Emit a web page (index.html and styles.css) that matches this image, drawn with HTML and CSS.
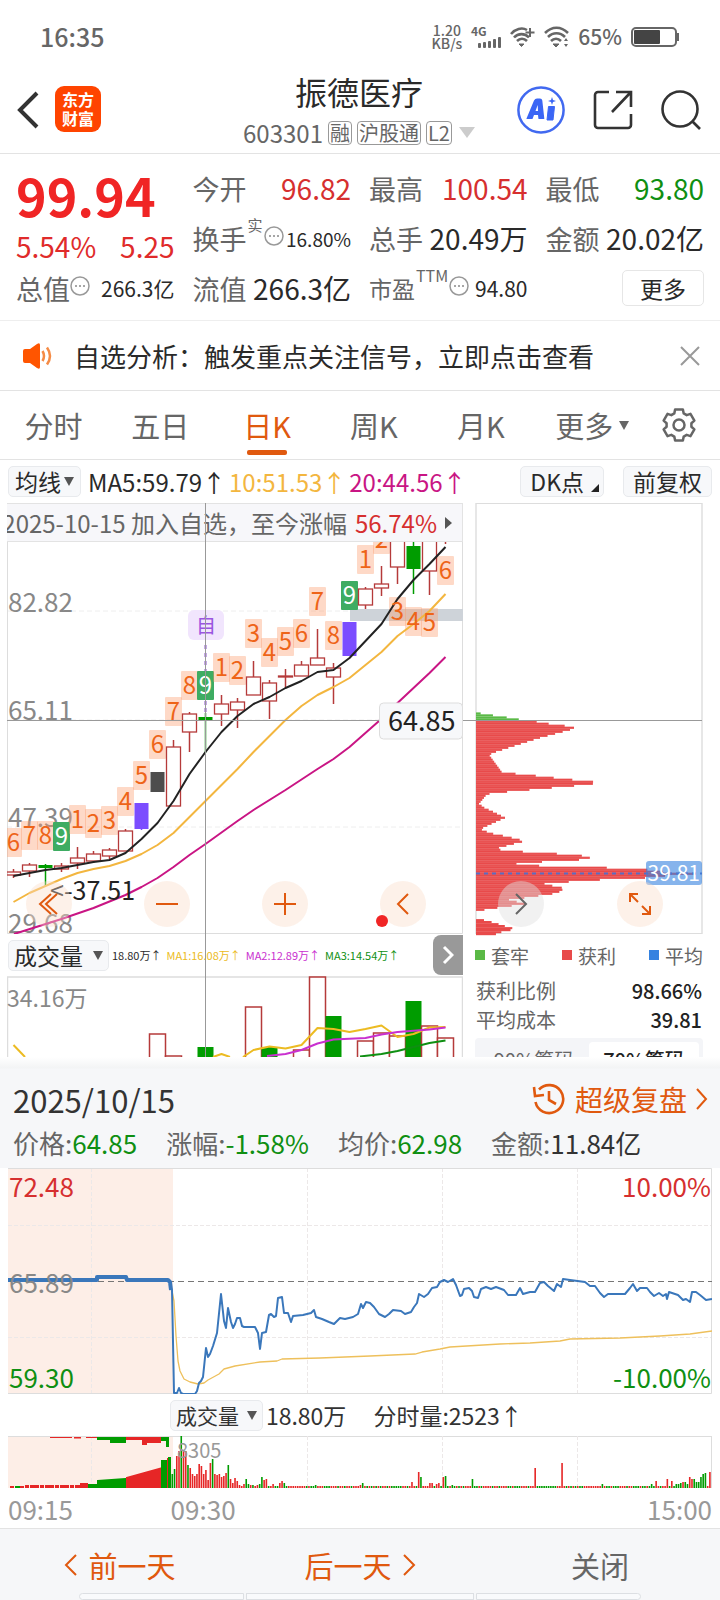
FILE: index.html
```html
<!DOCTYPE html>
<html lang="zh-CN">
<head>
<meta charset="utf-8">
<meta name="viewport" content="width=device-width, initial-scale=1">
<title>振德医疗 603301</title>
<link rel="stylesheet" href="styles.css">
</head>
<body>
<div class="status">
  <span class="clock">16:35</span>
  <div class="status-right">
    <span class="rate">1.20<br>KB/s</span>
    <svg class="signal" width="32" height="24" viewBox="0 0 32 24"><text x="1" y="11" class="sig-text">4G</text><g fill="#666"><rect x="8" y="18" width="3" height="5" rx="1"/><rect x="13" y="17" width="3" height="6" rx="1"/><rect x="18" y="16" width="3" height="7" rx="1"/><rect x="23" y="14" width="3" height="9" rx="1"/><rect x="28" y="12" width="3" height="11" rx="1"/></g></svg>
    <svg width="26" height="22" viewBox="0 0 26 22" fill="none" stroke="#666" stroke-width="2.6"><path d="M1 8C5 3 12 1 17 4"/><path d="M4 11.500C8 7 15 7 19 11.500M7 15C10 12 14 12 17 15"/><path d="M9 18h5l-2.500 2.500z" fill="#666" stroke-width="1"/><path d="M20 2v9M15.500 6.500h9" stroke-width="2"/></svg>
    <svg width="26" height="22" viewBox="0 0 26 22" fill="none" stroke="#666" stroke-width="2.600"><path d="M1 7C8 0 17 0 24 7M4 11C9 6 16 6 21 11M7 15C10 12 14 12 17 15"/><path d="M9 18h6l-3 3z" fill="#666" stroke-width="1"/><path d="M20 15l2-3 2 3zM20 18l2 3 2-3z" fill="#666" stroke="none"/></svg>
    <span class="percent">65%</span>
    <svg width="50" height="22" viewBox="0 0 50 22"><rect x="2" y="2" width="44" height="18" rx="4" fill="#fff" stroke="#666" stroke-width="2"/><rect x="4" y="4" width="26" height="14" rx="1" fill="#444"/><path d="M47 7h2v8h-2z" fill="#666"/></svg>
  </div>
</div>

<header class="header">
  <div class="header-left">
    <button class="icon-btn" aria-label="返回"><svg width="22" height="38" viewBox="0 0 22 38" fill="none" stroke="#333" stroke-width="4"><path d="M20 2L3 19l17 17"/></svg></button>
    <div class="logo"><span>东方</span><span>财富</span></div>
  </div>
  <div class="header-title">
    <h1>振德医疗</h1>
    <div class="code"><span>603301</span><span class="badge">融</span><span class="badge">沪股通</span><span class="badge">L2</span><svg class="code-arrow" width="16" height="11" viewBox="0 0 16 11"><path d="M0 0h16L8 11z" fill="#ccc"/></svg></div>
  </div>
  <div class="header-right">
    <button class="icon-btn" aria-label="Ai"><svg width="48" height="48" viewBox="0 0 48 48"><circle cx="24" cy="24" r="22.600" fill="none" stroke="#4169f0" stroke-width="2.500"/><path d="M9.500 32.500L17 14.500q1-2 3-2h3q2 0 2.300 2l2 18q0 .5-.5.500H22q-.5 0-.6-.5L21 29h-4l-1.300 3.500q-.2.500-.7.500h-5q-.7 0-.5-.5zM18.500 25H21l-.3-6z" fill="#3b66f5" fill-rule="evenodd"/><path d="M31.500 20.500h6L36 34h-6z" fill="#3b66f5" stroke="#3b66f5" stroke-linejoin="round"/><path d="M35 11l1 3 3 1-3 1-1 3-1-3-3-1 3-1z" fill="#3b66f5"/></svg></button>
    <button class="icon-btn" aria-label="分享"><svg width="40" height="40" viewBox="0 0 40 40" fill="none" stroke="#333" stroke-width="2.600"><path d="M16 2H5a3 3 0 0 0-3 3v30a3 3 0 0 0 3 3h30a3 3 0 0 0 3-3V24"/><path d="M23 2h15v15M37 3L19 22"/></svg></button>
    <button class="icon-btn" aria-label="搜索"><svg width="40" height="40" viewBox="0 0 40 40" fill="none" stroke="#333" stroke-width="2.600"><circle cx="19" cy="19" r="17.500"/><path d="M31 31l8 8"/></svg></button>
  </div>
</header>

<section class="quote">
  <div class="quote-col lead">
    <div class="price">99.94</div>
    <div class="change"><span>5.54%</span><span>5.25</span></div>
    <div class="cell short"><span class="label">总值</span><svg class="dots" viewBox="0 0 20 20"><use href="#dots"/></svg><span class="value mid">266.3亿</span></div>
  </div>
  <div class="quote-col">
    <div class="cell"><span class="label">今开</span><span class="value up">96.82</span></div>
    <div class="cell"><span class="label">换手</span><sup>实</sup><svg class="dots" viewBox="0 0 20 20"><use href="#dots"/></svg><span class="value small">16.80%</span></div>
    <div class="cell"><span class="label">流值</span><span class="value">266.3亿</span></div>
  </div>
  <div class="quote-col">
    <div class="cell"><span class="label">最高</span><span class="value up">100.54</span></div>
    <div class="cell"><span class="label">总手</span><span class="value">20.49万</span></div>
    <div class="cell"><span class="label narrow">市盈</span><sup class="ttm">TTM</sup><svg class="dots" viewBox="0 0 20 20"><use href="#dots"/></svg><span class="value mid">94.80</span></div>
  </div>
  <div class="quote-col">
    <div class="cell"><span class="label">最低</span><span class="value down">93.80</span></div>
    <div class="cell"><span class="label">金额</span><span class="value">20.02亿</span></div>
    <div class="cell end"><button class="more">更多</button></div>
  </div>
  <svg class="defs" aria-hidden="true"><defs><g id="dots"><circle cx="10" cy="10" r="9" fill="none" stroke="#999" stroke-width="1.500"/><circle cx="6" cy="10" r="1" fill="#888"/><circle cx="10" cy="10" r="1" fill="#888"/><circle cx="14" cy="10" r="1" fill="#888"/></g></defs></svg>
</section>

<section class="notice">
  <svg width="30" height="26" viewBox="0 0 30 26"><path d="M1 8q0-2 2-2h5l7-5q3-2 3 1v22q0 3-3 1l-7-5H3q-2 0-2-2z" fill="#ff5500"/><path d="M20.500 8q3 5 0 10M25 4.500q6 8.500 0 17" fill="none" stroke="#f58b45" stroke-width="2.500"/></svg>
  <p>自选分析：触发重点关注信号，立即点击查看</p>
  <button class="icon-btn" aria-label="关闭提示"><svg width="20" height="20" viewBox="0 0 20 20" stroke="#999" stroke-width="2"><path d="M1 1l18 18M19 1L1 19"/></svg></button>
</section>

<nav class="tabs">
  <button>分时</button><button>五日</button><button class="active">日K</button><button>周K</button><button>月K</button>
  <button class="tab-more">更多<svg width="10" height="9" viewBox="0 0 10 9"><path d="M0 0h10L5 9z" fill="#666"/></svg></button>
  <button aria-label="设置"><svg width="36" height="36" viewBox="-18 -18 36 36" fill="none" stroke="#666" stroke-width="2.500" stroke-linejoin="round"><path d="M-4.700-11.600L-3.900-15.500H3.900L4.700-11.600 7.700-9.870 11.470-11.130 15.370-4.370 12.400-1.730V1.730L15.370 4.370 11.470 11.130 7.700 9.870 4.700 11.600 3.900 15.500H-3.900L-4.700 11.600-7.700 9.870-11.470 11.130-15.370 4.370-12.400 1.730V-1.730L-15.370-4.370-11.470-11.130-7.700-9.870z"/><circle r="5.500"/></svg></button>
</nav>

<section class="ma-row">
  <button class="chip">均线<svg width="10" height="9" viewBox="0 0 10 9"><path d="M0 0h10L5 9z" fill="#555"/></svg></button>
  <div class="ma-values"><span>MA5:59.79↑</span><span class="ma10">10:51.53↑</span><span class="ma20">20:44.56↑</span></div>
  <button class="chip dk">DK点<svg width="8" height="8" viewBox="0 0 8 8"><path d="M8 0v8H0z" fill="#222"/></svg></button>
  <button class="chip">前复权</button>
</section>

<main class="charts">
  <div class="chart-left">
    <div class="banner"><span>2025-10-15 加入自选，至今涨幅</span><strong>56.74%</strong><svg width="7" height="12" viewBox="0 0 7 12"><path d="M0 0l7 6-7 6z" fill="#555"/></svg></div>
    <div class="k-wrap">
      <svg id="kline" class="chart" viewBox="7 541 456 392" role="img" aria-label="日K线"></svg>
      <div class="round-bar">
        <button class="round" aria-label="最早"><svg viewBox="-23 -23 46 46"><path d="M2-10L-9 0 2 10M8-10L-3 0 8 10"/></svg></button>
        <button class="round" aria-label="缩小"><svg viewBox="-23 -23 46 46"><path d="M-11 0H11"/></svg></button>
        <button class="round" aria-label="放大"><svg viewBox="-23 -23 46 46"><path d="M-11 0H11M0-11V11"/></svg></button>
        <button class="round dot" aria-label="左移"><svg viewBox="-23 -23 46 46"><path d="M5-10L-5 0 5 10"/></svg></button>
      </div>
    </div>
    <div class="vol-head">
      <button class="chip vol-chip">成交量<svg width="10" height="9" viewBox="0 0 10 9"><path d="M0 0h10L5 9z" fill="#555"/></svg></button>
      <div class="vol-ma"><span>18.80万↑</span><span class="v1">MA1:16.08万↑</span><span class="v2">MA2:12.89万↑</span><span class="v3">MA3:14.54万↑</span></div>
      <button class="next" aria-label="展开"><svg width="12" height="20" viewBox="0 0 12 20" fill="none" stroke="#fff" stroke-width="3"><path d="M2 2l8 8-8 8"/></svg></button>
    </div>
    <svg id="volume" class="chart" viewBox="7 975 456 81" role="img" aria-label="成交量"></svg>
    <i class="cross-v"></i>
  </div>
  <aside class="chart-right">
    <div class="chip-wrap">
      <svg id="cost" class="chart" viewBox="475 502 228 431" role="img" aria-label="筹码分布"></svg>
      <div class="round-bar">
        <button class="round grey" aria-label="右移"><svg viewBox="-23 -23 46 46"><path d="M-5-10L5 0-5 10"/></svg></button>
        <button class="round" aria-label="全屏"><svg viewBox="-23 -23 46 46"><path d="M-10-2V-10H-2M-10-10L-2-2M10 2V10H2M10 10L2 2"/></svg></button>
      </div>
    </div>
    <ul class="legend"><li class="l-green">套牢</li><li class="l-red">获利</li><li class="l-blue">平均</li></ul>
    <dl class="facts"><dt>获利比例</dt><dd>98.66%</dd><dt>平均成本</dt><dd>39.81</dd></dl>
    <div class="segment"><button>90%筹码</button><button class="on">70%筹码</button></div>
  </aside>
</main>

<section class="sheet">
  <div class="sheet-head">
    <div class="date-row"><time>2025/10/15</time>
      <a class="replay" href="#replay"><svg width="34" height="32" viewBox="0 0 34 32" fill="none" stroke="#e0590f" stroke-width="2.600"><path d="M7 6.500A14 14 0 1 1 3.500 19"/><path d="M2 4l1 9 9-1"/><path d="M17 8v9l7 4"/></svg>超级复盘<svg width="12" height="22" viewBox="0 0 12 22" fill="none" stroke="#e0590f" stroke-width="2"><path d="M1 1l9 10-9 10"/></svg></a>
    </div>
    <div class="stats"><span>价格:<b class="down">64.85</b></span><span>涨幅:<b class="down">-1.58%</b></span><span>均价:<b class="down">62.98</b></span><span>金额:<b>11.84亿</b></span></div>
  </div>
  <div class="minute">
    <svg id="minute" class="chart" viewBox="8 1167 704 226" role="img" aria-label="分时"></svg>
    <div class="minute-head"><button class="chip">成交量<svg width="10" height="9" viewBox="0 0 10 9"><path d="M0 0h10L5 9z" fill="#555"/></svg></button><span>18.80万</span><span class="tick">分时量:2523↑</span></div>
    <svg id="minvol" class="chart" viewBox="8 1435 704 53" role="img" aria-label="分时成交量"></svg>
    <div class="times"><span>09:15</span><span>09:30</span><span>15:00</span></div>
  </div>
</section>

<footer class="footer">
  <button><svg width="14" height="22" viewBox="0 0 14 22" fill="none" stroke="#e0590f" stroke-width="2"><path d="M12 1L2 11l10 10"/></svg>前一天</button>
  <button>后一天<svg width="14" height="22" viewBox="0 0 14 22" fill="none" stroke="#e0590f" stroke-width="2"><path d="M2 1l10 10L2 21"/></svg></button>
  <button class="close">关闭</button>
  <div class="strip"><i></i><i></i><i></i></div>
</footer>
<script src="charts.js"></script>
</body>
</html>
```
FILE: styles.css
```css
* { box-sizing: border-box; }
body { margin: 0; background: #fff; color: #2a2a2a; font-family: "Noto Sans CJK SC", sans-serif; line-height: 1; }
button { border: 0; padding: 0; margin: 0; background: none; font: inherit; color: inherit; line-height: inherit; }
h1, p, ul, dl, dd { margin: 0; padding: 0; }
svg { display: block; flex: none; }
a { text-decoration: none; }
.defs { display: none; }
.chart { width: 100%; height: auto; }
.icon-btn { display: flex; }

.status { display: flex; justify-content: space-between; align-items: center; height: 76px; padding: 0 40px 3px; color: #666; }
.clock { font-size: 25px; font-weight: 500; }
.status-right { display: flex; align-items: center; gap: 8px; }
.rate { font-size: 14px; line-height: 13px; font-weight: 500; text-align: center; }
.sig-text { font-size: 12px; font-weight: 700; fill: #666; }
.percent { font-size: 21px; font-weight: 500; }

.header { display: grid; grid-template-columns: 1fr auto 1fr; align-items: center; height: 78px; padding: 0 19px 0 17px; border-bottom: 1px solid #e3e3e3; }
.header-left { display: flex; align-items: center; gap: 16px; padding-bottom: 12px; }
.header-left .icon-btn { padding-top: 2px; }
.logo { display: flex; flex-direction: column; align-items: center; justify-content: center; width: 46px; height: 46px; border-radius: 9px; background: #ff4400; color: #fff; font-size: 16px; font-weight: 700; line-height: 19px; }
.header-title h1 { font-size: 32px; font-weight: 400; line-height: 31px; text-align: center; }
.code { display: flex; align-items: center; gap: 5px; height: 47px; padding-top: 4px; font-size: 24px; color: #666; }
.badge { border: 1px solid #999; border-radius: 4px; font-size: 20px; line-height: 22px; padding: 0 1px; }
.code-arrow { margin-left: 2px; }
.header-right { display: flex; justify-content: flex-end; align-items: center; gap: 28px; padding-bottom: 11px; }

.quote { display: grid; grid-template-columns: repeat(4, 1fr); gap: 18px; padding: 9px 16px 7px; border-bottom: 1px solid #eee; }
.cell { display: flex; align-items: center; height: 50px; color: #666; font-size: 27px; }
.cell .value { margin-left: auto; color: #2a2a2a; font-size: 28px; }
.cell .mid { font-size: 21px; }
.cell .small { font-size: 19px; }
.cell .up { color: #d62f2f; }
.cell .down, .down { color: #0f8f12; }
.cell .narrow { font-size: 23px; }
.cell sup { align-self: flex-start; font-size: 15px; line-height: 20px; padding: 2px 1px 0; }
.cell .ttm { font-size: 16px; }
.dots { width: 20px; height: 20px; margin-bottom: 5px; }
.lead { padding-top: 4px; }
.price { font-size: 52px; font-weight: 700; line-height: 56px; color: #f02525; }
.change { display: flex; justify-content: space-between; font-size: 28px; line-height: 46px; color: #e02b2b; }
.short { height: 38px; }
.end { justify-content: flex-end; }
.more { width: 82px; height: 36px; border: 1px solid #e6e6e6; border-radius: 5px; font-size: 23px; color: #2a2a2a; }

.notice { display: flex; align-items: center; height: 70px; padding: 0 20px 0 22px; border-bottom: 1px solid #e3e3e3; }
.notice p { flex: 1; padding-left: 22px; font-size: 26px; }

.tabs { display: grid; grid-template-columns: repeat(5, 107fr) 116fr 58fr; height: 69px; padding-right: 12px; border-bottom: 1px solid #e3e3e3; color: #666; font-size: 29px; }
.tabs button { position: relative; display: flex; align-items: center; justify-content: center; gap: 6px; }
.tabs .active { color: #e0590f; }
.tabs .active::after { content: ""; position: absolute; left: 50%; bottom: 4px; width: 40px; height: 5px; margin-left: -20px; border-radius: 2px; background: #e0590f; }

.ma-row { display: flex; align-items: center; height: 43px; padding: 0 8px; }
.chip { display: flex; align-items: center; justify-content: center; gap: 3px; height: 31px; padding: 0 6px; border: 1px solid #e8eaed; border-radius: 5px; background: #f7f8fa; font-size: 23px; }
.ma-values { display: flex; flex: 1; gap: 3px; padding-left: 7px; font-size: 24px; }
.ma10 { color: #f3b63f; }
.ma20 { color: #c91584; }
.dk { margin-right: 19px; padding: 0 4px 0 9px; gap: 7px; }
.dk svg { align-self: flex-end; margin-bottom: 4px; }
.ma-row .chip:last-child { padding: 0 9px; }

.charts { display: grid; grid-template-columns: minmax(0, 456fr) minmax(0, 228fr); gap: 12px; padding: 0 17px 0 7px; }
.chart-left { position: relative; }
.banner { display: flex; align-items: center; justify-content: flex-end; gap: 8px; height: 39px; padding-right: 10px; overflow: hidden; white-space: nowrap; background: #f7f7fa; border: 1px solid #e3e3e3; border-left: 0; font-size: 24px; color: #666; }
.banner strong { font-weight: 400; color: #d62f2f; }
.k-wrap, .chip-wrap { position: relative; }
.round-bar { position: absolute; left: 19px; right: 37px; bottom: 7px; display: flex; justify-content: space-between; }
.chip-wrap .round-bar { left: 23px; right: 40px; }
.round { position: relative; width: 46px; height: 46px; border-radius: 50%; background: rgba(250, 219, 200, .4); }
.round svg { width: 46px; height: 46px; fill: none; stroke: #e0590f; stroke-width: 2; }
.round.grey { background: rgba(225, 225, 225, .45); }
.round.grey svg { stroke: #666; }
.dot::before { content: ""; position: absolute; left: -4px; bottom: 0; width: 12px; height: 12px; border-radius: 50%; background: #f02525; }
.cross-v { position: absolute; top: 0; bottom: 0; left: 43.5%; width: 1px; background: #999; }

.vol-head { display: flex; align-items: center; height: 42px; padding-left: 1px; }
.vol-chip { width: 101px; gap: 10px; padding: 0; }
.vol-ma { display: flex; flex: 1; gap: 5px; padding-left: 3px; white-space: nowrap; font-size: 11px; }
.v1 { color: #ecbb22; }
.v2 { color: #c930cf; }
.v3 { color: #0f8f12; }
.next { display: flex; align-items: center; justify-content: center; width: 30px; height: 40px; border-radius: 8px 0 0 8px; background: #999; }

.legend { display: flex; justify-content: space-between; list-style: none; height: 42px; align-items: center; font-size: 19px; color: #666; }
.legend li { display: flex; align-items: center; gap: 6px; }
.legend li::before { content: ""; width: 10px; height: 10px; }
.l-green::before { background: #5ab946; }
.l-red::before { background: #e84a4a; }
.l-blue::before { background: #3582e0; }
.facts { display: grid; grid-template-columns: 1fr auto; font-size: 20px; line-height: 29px; color: #666; padding: 0 1px; }
.facts dd { color: #222; font-weight: 500; text-align: right; }
.segment { display: grid; grid-template-columns: 1fr 1fr; height: 19px; margin-top: 4px; padding: 4px 4px 0; overflow: hidden; border-radius: 4px 4px 0 0; background: #f4f5f8; font-size: 20px; color: #666; }
.segment button { height: 36px; border-radius: 4px; }
.segment .on { background: #fff; color: #222; font-weight: 500; }

.sheet-head { padding: 20px 12px 0 13px; height: 111px; background: linear-gradient(#fff, #f3f4f5 11px, #f6f7f9 12px); }
.date-row { display: flex; justify-content: space-between; align-items: center; height: 44px; font-size: 31px; color: #333; }
.replay { display: flex; align-items: center; gap: 9px; font-size: 28px; color: #e0590f; }
.stats { display: flex; gap: 29px; font-size: 26px; line-height: 44px; color: #666; }
.stats b { font-weight: 400; color: #333; }
.stats .down { color: #0f8f12; }
.minute { padding: 0 8px; }
.minute-head { display: flex; align-items: center; height: 42px; padding-left: 23%; font-size: 23px; color: #333; }
.minute-head .chip { gap: 8px; margin-right: 3px; padding: 0 5px; font-size: 21px; }
.minute-head .tick { margin-left: 27px; }
.times { display: grid; grid-template-columns: 23.100% 1fr auto; font-size: 26px; line-height: 39px; color: #999; }

.footer { position: relative; display: grid; grid-template-columns: repeat(3, 1fr); height: 73px; border-top: 1px solid #e3e3e3; background: #f6f7f9; font-size: 29px; color: #e0590f; }
.footer button { display: flex; align-items: center; justify-content: center; gap: 10px; }
.footer .close { color: #666; }
.strip { position: absolute; left: 11%; right: 11%; bottom: 1px; display: grid; grid-template-columns: 164fr 227fr 164fr; gap: 2px; }
.strip i { height: 7px; border: 1px solid #dcdfe3; background: #f9fafc; }
.strip i:first-child { border-radius: 4px 0 0 4px; }
.strip i:last-child { border-radius: 0 4px 4px 0; }

.axis { font-size: 26px; fill: #888; }
.axis.rise { fill: #d62f2f; }
.axis.fall { fill: #0f8f12; }
.tag { font-size: 24px; fill: #ee6418; text-anchor: middle; }
.tag.nine { fill: #fff; }
.fine { font-size: 23px; fill: #888; }
.dim { font-size: 20px; fill: #999; }
.point { font-size: 25px; fill: #222; }
.cursor { font-size: 27px; fill: #222; }
.self { font-size: 20px; fill: #9a55e0; text-anchor: middle; }
.avg { font-size: 21px; fill: #fff; text-anchor: end; }
.right { text-anchor: end; }
```
FILE: charts.js
```javascript
const RED = '#b53a3a', GREEN = '#009c00';
const rect = (x, y, w, h, fill, extra = '') => `<rect x="${x}" y="${y}" width="${w}" height="${h}" fill="${fill}" ${extra}/>`;
const seg = (x1, y1, x2, y2, color, extra = '') => `<path d="M${x1} ${y1}L${x2} ${y2}" stroke="${color}" ${extra}/>`;
const poly = (pts, color, w = 2) => `<polyline points="${pts}" fill="none" stroke="${color}" stroke-width="${w}" stroke-linejoin="round"/>`;
const text = (x, y, cls, s) => `<text x="${x}" y="${y}" class="${cls}">${s}</text>`;
const cx = i => 13.5 + 16 * i;
const series = (ys, first = 0) => ys.map((y, i) => `${cx(first + i)},${y}`).join(' ');
const put = (id, parts) => { document.getElementById(id).innerHTML = parts.join(''); };

/* Daily candles: kind, body top, body bottom, high, low */
const candles = [
  ['r',871,874,868,877],['r',864,870,862,876],['g',864,867,863,885],['r',865,868,862,871],
  ['r',857,862,846,868],['r',853,860,850,862],['r',849,855,847,858],['r',830,850,828,850],
  ['p',802,828,802,829],['k',771,791,771,791],['r',746,805,739,805],['r',713,731,711,751],
  ['g',716,719,712,752],['r',703,713,694,725],['r',701,709,697,727],['r',676,694,660,694],
  ['r',682,700,679,718],['r',675,676,668,687],['r',664,675,660,675],['r',657,664,628,664],
  ['r',667,676,662,703],['p',621,655,621,655],['r',588,604,586,608],['r',583,587,565,595],
  ['r',520,566,520,583],['g',545,568,530,593],['r',520,570,520,594],['r',520,530,520,543]];
const tags = [[6,827],[7,820],[8,820],[9,821],[1,804],[2,808],[3,805],[4,786],[5,760],[6,729],[7,696],[8,670],[9,670],
  [1,652],[2,655],[3,618],[4,637],[5,626],[6,618],[7,586],[8,620],[9,580],[1,544],[2,524],[3,596],[4,606],[5,607],[6,555]];
const k = [];
for (const y of [610, 719, 826]) k.push(seg(7, y, 463, y, '#eee', 'stroke-dasharray="5 3"'));
k.push('<path d="M7.500 541V932.500H462.500V541" fill="none" stroke="#ddd"/>', rect(350, 608, 113, 12, '#ced3d9'));
k.push(text(8, 611, 'axis', '82.82'), text(8, 719, 'axis', '65.11'), text(8, 826, 'axis', '47.39'), text(8, 932, 'axis', '29.68'));
tags.forEach(([n, y], i) => {
  k.push(rect(cx(i) - 8.5, y, 17, 29, n === 9 ? '#3eac62' : '#fc9a6c', n === 9 ? 'rx="1"' : 'rx="1" fill-opacity=".38"'));
});
candles.forEach(([c, t, b, h, l], i) => {
  const x = cx(i), col = { r: RED, g: GREEN, p: '#7b4dff', k: '#4d4d4d' }[c];
  k.push(seg(x, h, x, t, col, 'stroke-width="1.5"'), seg(x, b, x, l, col, 'stroke-width="1.5"'));
  k.push(rect(x - 7, t, 14, b - t, c === 'r' ? 'none' : col, `stroke="${c === 'r' ? col : 'none'}" stroke-width="1.3"`));
});
k.push(poly('14,933 33,927 61.5,918 93.5,907 125.5,894 141.5,886 157.5,877 173.5,866 189.5,854 205.5,843 237.5,820 253.5,809 285.5,789 317.5,768 333.5,758 349.5,746 379,720 397.5,702 413.5,687 429.5,672 445.5,656', '#c91584'));
k.push(poly(series([901,892,885,878,872,868,865,860,853,844,832,816,800,784,768,751,735,719,705,694,686,677,664,651,635,623,610,593]), '#f3b63f'));
k.push(poly(series([875,872,869,867,864,861,859,852,838,822,800,773,751,731,715,703,696,687,680,671,669,657,640,623,598,579,563,546]), '#222'));
tags.forEach(([n, y], i) => k.push(text(cx(i), y + 23, n === 9 ? 'tag nine' : 'tag', n)));
k.push(seg(205.5, 644, 205.5, 670, '#8b4fd0', 'stroke-width="2" stroke-dasharray="4 4"'), seg(205.5, 700, 205.5, 712, '#8b4fd0', 'stroke-width="2" stroke-dasharray="4 3"'));
k.push(rect(188, 609, 36, 30, '#f1e5fd', 'rx="6"'), text(206, 632, 'self', '自'), text(50, 899, 'point', '&lt;-37.51'));
k.push(seg(7, 719.5, 463, 719.5, '#999'), rect(379.5, 702, 83, 36, '#f7f8fa', 'rx="4" stroke="#ddd"'), text(388, 730, 'cursor', '64.85'));
put('kline', k);

/* Daily volume: index, bar top, kind */
const v = ['<path d="M7.500 1056V976H462.500V1056" fill="none" stroke="#ddd" stroke-width="1.500"/>'];
for (const [i, t, c] of [[9,1033,'r'],[10,1055,'r'],[12,1046,'g'],[15,1006,'r'],[16,1046,'g'],[18,1049,'r'],[19,976,'r'],[20,1015,'g'],[22,1040,'r'],[23,1032,'r'],[24,1035,'r'],[25,1000,'g'],[26,1025,'r'],[27,1037,'r']])
  v.push(rect(cx(i) - 8, t, 16, 1060 - t, c === 'g' ? GREEN : '#fff', c === 'r' ? `stroke="${RED}" stroke-width="1.500"` : ''));
v.push(poly('13.5,1044 25,1056', '#ecbb22'), poly('213,1056 221.5,1053 230,1056', '#ecbb22'),
  poly('243,1056 253.5,1049 269.5,1045.5 285.5,1047.5 301.5,1044 317.5,1027 333.5,1028 349.5,1031 365.5,1028 381.5,1024.5 397.5,1036 413.5,1033 429.5,1026.5 445.5,1026', '#ecbb22'),
  poly('360,1055.5 381.5,1053 397.5,1050 429.5,1042 445.5,1039.5', '#0f8f12'),
  poly('267,1055 285.5,1053 301.5,1049 317.5,1042.5 333.5,1038.5 365.5,1037 381.5,1033.5 397.5,1031 429.5,1028.5 445.5,1026.5', '#c930cf'),
  text(7, 1006, 'fine', '34.16万'));
put('volume', v);

/* Cost distribution: [bar length, y] samples, in thirds of a unit */
const green = [[47,64],[90,71],[132,77],[173,84],[200,88]];
const red = [[215,89],[257,96],[299,101],[327,107],[315,113],[293,119],[225,137],[180,151],[133,166],[90,180],[72,188],[112,242],[178,247],[238,254],[294,260],[350,266],[407,271],[372,277],[305,283],[238,289],[171,295],[104,301],[66,306],[42,335],[58,347],[82,358],[120,377],[84,393],[46,411],[75,423],[128,434],[180,447],[158,452],[128,460],[87,471],[135,476],[212,482],[339,488],[362,494],[387,500],[297,506],[187,511],[130,518],[284,523],[496,529],[560,534],[600,540],[709,546],[600,551],[540,557],[382,564],[297,570],[227,576],[262,581],[295,588],[290,597],[262,605],[220,611],[178,617],[132,623],[155,629],[180,635],[140,641],[90,648],[52,654]];
const low = [[57,684],[95,694],[112,700],[153,711],[120,717],[98,723],[86,730]];
const bars = (pts, color) => {
  let out = '';
  for (let y = pts[0][1]; y < pts[pts.length - 1][1]; y += 6) {
    let j = pts.findIndex(p => p[1] >= y);
    if (j < 0) j = pts.length - 1;
    const a = pts[Math.max(0, j - 1)], b = pts[j];
    const f = b[1] === a[1] ? 0 : Math.min(1, (y - a[1]) / (b[1] - a[1]));
    const len = (a[0] + (b[0] - a[0]) * f - 33) / 3;
    out += rect(476, 690 + y / 3, len, 2.2, color) + (y % 12 < 6 ? rect(476, 690 + y / 3, len, .6, '#fff', 'fill-opacity=".18"') : '');
  }
  return out;
};
put('cost', [
  '<path d="M476 502V933M702 502V933" stroke="#e0e0e0" stroke-width="1.500"/>', seg(476, 502.5, 702, 502.5, '#ddd'), seg(476, 932.5, 702, 932.5, '#ddd'),
  bars(green, '#5ab946'), bars(red, '#e84a4a'), bars(low, '#e84a4a'),
  seg(463, 719.5, 702, 719.5, '#999'), seg(476, 872.5, 702, 872.5, '#5a6bc0', 'stroke-width="2" stroke-dasharray="4 4"'),
  rect(646, 860, 56, 24, '#3582e0', 'rx="3" fill-opacity=".6"'), text(700, 880, 'avg', '39.81')]);
document.getElementById('cost').style.overflow = 'visible';

/* Intraday price */
const price = '171,1288 172,1289 174,1392 177,1392 179,1387 181,1392 183,1393 195,1393 197,1390 199,1382 201,1380 203,1376 206,1347 208,1356 210,1353 213,1345 217,1332 221,1293 224,1320 226,1327 228,1307 231,1321 233,1327 235,1323 237,1317 240,1317 242,1325 244,1326 255,1326 258,1332 260,1348 262,1332 266,1331 269,1314 271,1313 274,1316 276,1315 278,1297 282,1296 284,1312 288,1312 291,1321 293,1315 303,1314 311,1312 314,1309 316,1316 322,1318 329,1321 334,1323 340,1317 345,1318 353,1316 358,1313 361,1303 363,1307 366,1301 370,1302 374,1306 379,1313 385,1316 389,1313 393,1309 401,1310 405,1313 411,1311 414,1306 417,1302 419,1293 424,1296 428,1293 432,1287 437,1286 440,1281 444,1279 448,1281 453,1278 456,1284 460,1295 462,1294 464,1288 469,1287 472,1290 474,1296 478,1297 481,1288 486,1286 491,1288 496,1286 504,1289 508,1294 516,1294 520,1287 523,1293 530,1291 535,1291 540,1282 544,1281 548,1285 554,1290 557,1283 561,1286 563,1278 570,1279 585,1281 590,1285 595,1285 600,1292 604,1296 608,1293 625,1293 630,1287 633,1283 637,1290 640,1287 647,1287 650,1291 654,1295 659,1292 663,1295 666,1293 667,1298 669,1291 678,1294 683,1299 686,1298 690,1301 692,1291 696,1291 700,1294 706,1299 712,1298';
const average = '172,1290 174,1300 176,1335 178,1360 180,1370 184,1378 190,1381 198,1383 204,1382 208,1379 219,1373 224,1368 235,1365 260,1361 277,1360 282,1358 320,1357 370,1355 415,1353 422,1351 440,1348 450,1346 500,1343 530,1342 560,1340 570,1338 620,1337 660,1335 690,1333 712,1330';
const m = [rect(8, 1167, 165, 226, '#fdeee7')];
for (const x of [91.5, 307.5, 442.5, 577.5]) m.push(seg(x, 1167, x, 1392, '#ece8e8', 'stroke-dasharray="4 2"'));
for (const y of [1224.5, 1336.5]) m.push(seg(8, y, 712, y, '#ece8e8', 'stroke-dasharray="4 2"'));
m.push('<path d="M8 1167.500H711.500V1392.500H8" fill="none" stroke="#ddd"/>', seg(8, 1280.5, 712, 1280.5, '#777', 'stroke-dasharray="6 4"'),
  poly(average, '#eec05c', 1.3), poly(price, '#3a77bb'), poly('8,1279 97,1279 97,1276 126,1276 127,1279 168,1279 170,1281 171,1289', '#3a77bb', 4),
  text(9, 1196, 'axis rise', '72.48'), text(9, 1292, 'axis', '65.89'), text(9, 1387, 'axis fall', '59.30'),
  text(711, 1196, 'axis rise right', '10.00%'), text(711, 1387, 'axis fall right', '-10.00%'));
put('minute', m);

/* Intraday volume: sign gives the colour, size gives the height */
const R = '#e62626';
const n = [rect(8, 1435, 165, 52, '#fdeee7'), seg(8, 1435.5, 712, 1435.5, '#ddd'), seg(711.5, 1435, 711.5, 1487, '#ddd')];
for (const x of [91.5, 307.5, 442.5, 577.5]) n.push(seg(x, 1435, x, 1487, '#ece8e8', 'stroke-dasharray="4 2"'));
const up = (x, w, h, c) => n.push(rect(x, 1487 - h, w, h, c)), hang = (x, w, h, c) => n.push(rect(x, 1436, w, h, c));
for (let x = 10; x < 80; x += 5) up(x, x % 3 ? 4 : 5, x < 22 ? 2 : 3, x === 15 ? GREEN : R);
up(80, 8, 5, R); up(88, 9, 4, GREEN);
for (let x = 97; x < 126; x++) up(x, 1, 8 + (x - 97) / 14, GREEN);
for (let x = 126; x < 161; x++) up(x, 1, 11 + (x - 126) / 3.6, R);
up(161, 6, 28, GREEN); up(167, 1, 30, R); up(168, 3, 31, GREEN);
hang(50, 22, 1, R); hang(74, 7, 1.5, R); hang(86, 11, 1, R);
hang(97, 13, 3, GREEN); hang(110, 16, 6, GREEN); hang(126, 16, 3, R); hang(142, 5, 8, R); hang(147, 14, 6, R); hang(161, 5, 4, GREEN); hang(166, 3, 10, GREEN);
const opening = [-14,-19,32,37,-52,37,37,-23,20,14,12,14,24,22,14,18,8,25,-29,14,13,14,11,12,15,-23,9,5,10,7,3,2,4,-9,-4,3,-3,2,3,-4,-11,8,9,-2];
const spikes = { 45: 4, 48: 5, 49: 7, 50: -5, 64: -3, 84: 3, 85: -5, 107: 6, 110: 16, 111: -11, 115: 5, 116: 5, 118: 4, 119: 5, 121: 11, 122: -12, 125: -3, 134: -9, 162: 20, 174: 25, 192: -4, 214: -4, 216: 7, 221: 9, 223: 7, 225: -4, 226: -4, 227: -5, 228: 6, 229: -6, 230: -4, 231: 11, 232: 9, 233: -9, 234: -6, 235: -6, 236: -11, 237: -14, 238: -15, 239: 2, 240: 16 };
for (let i = 0; i < 241; i++) {
  const s = opening[i] ?? spikes[i] ?? (Math.sin(i * i) > 0 ? 2 : -2);
  up(171.5 + i * 2.24, 1.6, Math.abs(s), s > 0 ? R : GREEN);
}
n.push(text(177, 1457, 'dim', '8305'));
put('minvol', n);
```
